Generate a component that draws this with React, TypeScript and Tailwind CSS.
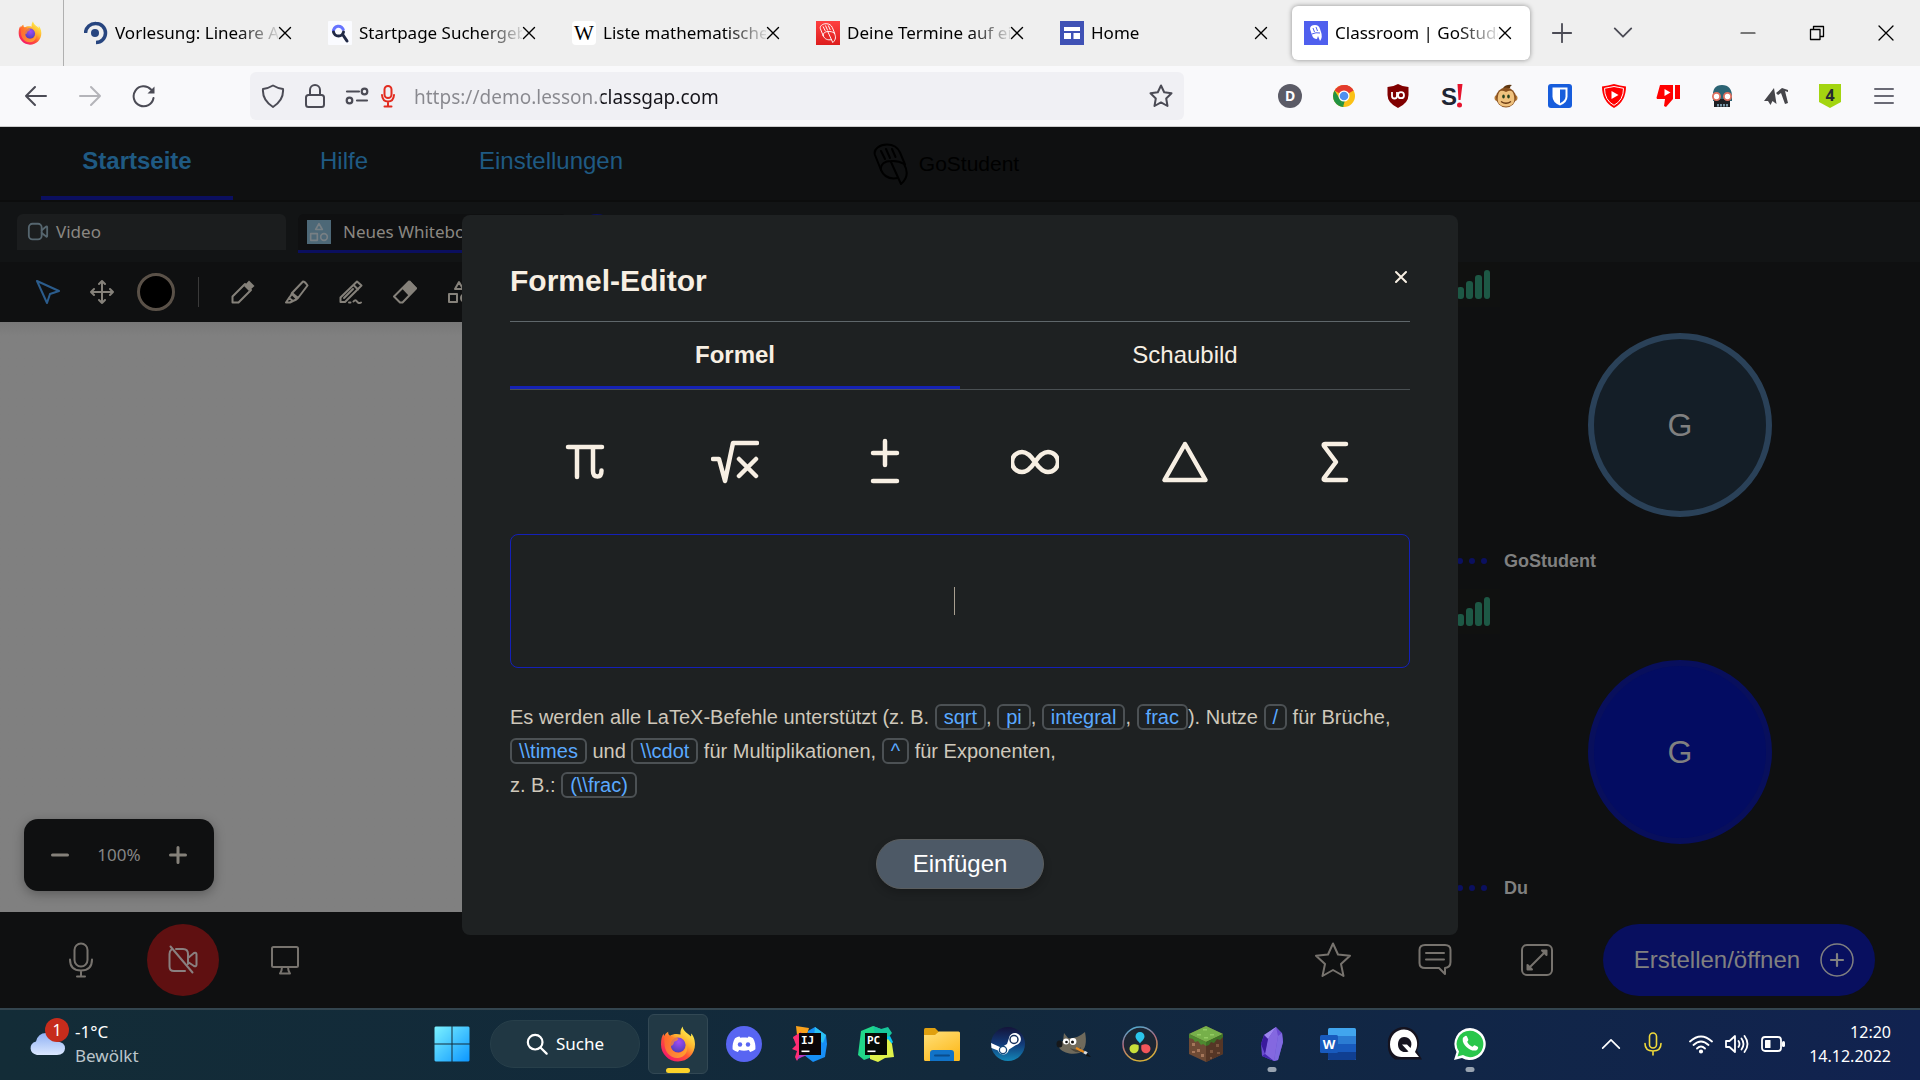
import type { ReactNode } from "react";

/* ---------- small drawing helpers ---------- */

type LineProps = { box?: number; className: string; width?: number; children: ReactNode };

function Line({ box = 24, className, width = 2, children }: LineProps) {
  return (
    <svg
      viewBox={`0 0 ${box} ${box}`}
      className={className}
      fill="none"
      stroke="currentColor"
      strokeWidth={width}
      strokeLinecap="round"
      strokeLinejoin="round"
      aria-hidden="true"
    >
      {children}
    </svg>
  );
}

function Art({ box = 36, className, children }: { box?: number; className: string; children: ReactNode }) {
  return (
    <svg viewBox={`0 0 ${box} ${box}`} className={className} aria-hidden="true">
      {children}
    </svg>
  );
}

const Cross = ({ className }: { className: string }) => (
  <Line box={14} className={className} width={1.4}>
    <path d="M1.500 1.500l11 11M12.500 1.500l-11 11" />
  </Line>
);

/* ---------- logos ---------- */

function Firefox({ className }: { className: string }) {
  return (
    <Art className={className}>
      <defs>
        <linearGradient id="ffBody" x1="0.85" y1="0.1" x2="0.2" y2="0.95">
          <stop offset="0" stopColor="#fff44f" />
          <stop offset="0.35" stopColor="#ffb02e" />
          <stop offset="0.6" stopColor="#ff5634" />
          <stop offset="1" stopColor="#f5156c" />
        </linearGradient>
        <radialGradient id="ffGlobe" cx="0.55" cy="0.3" r="0.75">
          <stop offset="0" stopColor="#a24bf5" />
          <stop offset="1" stopColor="#4a3fb5" />
        </radialGradient>
        <linearGradient id="ffHead" x1="0" y1="0" x2="1" y2="0.8">
          <stop offset="0" stopColor="#ff6a2b" />
          <stop offset="1" stopColor="#ffb52e" />
        </linearGradient>
      </defs>
      <path
        d="M22.500 0.500C21 3 20 5.500 20.500 8.500C17 7.500 12.500 8 10 9.800C8.500 8.800 8 7.300 8.200 5.700C6 6.800 4.800 8.500 4.200 10C3.800 9.300 3.700 8.500 3.800 7.600C1.800 10 1 13.500 1 18.500C1 28 8.800 35.500 18 35.500C27.500 35.500 35 28 35 18.300C35 12.500 32.500 8.500 31 7.500C31.300 8.800 31.200 9.800 31 10.500C28.500 7.500 23.500 6 22.500 0.500Z"
        fill="url(#ffBody)"
      />
      <circle cx="18" cy="19" r="7.600" fill="url(#ffGlobe)" />
      <path
        d="M4 10c3-1 7-.8 10 1.500 2 .4 3.800.6 4.300 1.300-.3 2-3 2.200-4.300 3.200-.2 2.400-1.500 3.400-3 4 0 4.500 4.500 7.500 9 6.500 4-1 6.500-4.500 6-9 3.500 7-1 14-8 14.500C10 32.500 4 25 4.500 17z"
        fill="url(#ffHead)"
        opacity=".75"
      />
    </Art>
  );
}

function GoHand({ className, width = 2 }: { className: string; width?: number }) {
  return (
    <svg viewBox="0 0 36 42" className={className} fill="none" stroke="currentColor" strokeWidth={width} strokeLinecap="round" strokeLinejoin="round" aria-hidden="true">
      <path d="M8 27L2 12C0 6 7 1.500 14 1.500c7 0 11 3.500 13 8l5 12" />
      <path d="M8 27c-1-6 4-9 10-9 6-.5 9 .5 13 3 4 7 4 14-3 20L18 19" />
      <path d="M8 27c3 7 9 9.500 17 8" />
      <path d="M8 8l4 8M13 6l4 9M19 6l3.500 8" />
    </svg>
  );
}

const taskApps: { name: string; state?: "active" | "open"; icon: ReactNode }[] = [
  { name: "Firefox", state: "active", icon: <Firefox className="size-9" /> },
  {
    name: "Discord",
    icon: (
      <Art className="size-9">
        <circle cx="18" cy="18" r="18" fill="#5865f2" />
        <path
          d="M13.500 10.500c-2 .3-3.500 1-4.500 1.700C7 15.500 6.300 19 6.600 23.300c1.800 1.400 3.500 2.200 5.300 2.700l1.300-2c3 1 6.600 1 9.600 0l1.300 2c1.800-.5 3.500-1.300 5.300-2.700.3-4.300-.4-7.800-2.400-11.100-1-.7-2.500-1.400-4.500-1.700l-.8 1.300c-2.400-.4-5-.4-7.400 0z"
          fill="#fff"
        />
        <circle cx="14" cy="18.500" r="2.200" fill="#5865f2" />
        <circle cx="22" cy="18.500" r="2.200" fill="#5865f2" />
      </Art>
    ),
  },
  {
    name: "IntelliJ IDEA",
    icon: (
      <Art className="size-9">
        <path d="M4 0l13 2-3 10-8 4-5-4 4-3z" fill="#f9a11c" />
        <path d="M1 11l8-5 4 14-8 15-2-4 2-6-5-2 4-4z" fill="#fe2d74" />
        <path d="M16 5l7-4 11 8 1 9-2 13-12 5-9-7z" fill="#178ef5" />
        <path d="M23 1l11 8-3 8-9-6z" fill="#2bc0f2" />
        <path d="M4 34l6-8 8 2-8 3z" fill="#b63cc4" />
        <rect x="7" y="7" width="22" height="22" fill="#0b0508" />
        <text x="9" y="18" fill="#fff" className="font-['DejaVu_Sans_Mono',monospace] text-[11px] font-bold">IJ</text>
        <rect x="9.500" y="24.500" width="8" height="1.600" fill="#fff" />
      </Art>
    ),
  },
  {
    name: "PyCharm",
    icon: (
      <Art className="size-9">
        <path d="M3 5l12-5 8 3 3 6-12 22-8 3-6-5z" fill="#21d789" />
        <path d="M15 0l8 3 7-2 4 6-5 6-12-5z" fill="#17c79b" />
        <path d="M24 12l8-2 3 6-4 5z" fill="#07c3f2" />
        <path d="M12 28l18-15 4 5 2 13-9 1-7 4-8-3z" fill="#dff24a" />
        <rect x="7" y="7" width="22" height="22" fill="#050a05" />
        <text x="9" y="18" fill="#fff" className="font-['DejaVu_Sans_Mono',monospace] text-[11px] font-bold">PC</text>
        <rect x="9.500" y="24.500" width="8" height="1.600" fill="#fff" />
      </Art>
    ),
  },
  {
    name: "Explorer",
    icon: (
      <Art className="size-9">
        <defs>
          <linearGradient id="folder" x1="0" y1="0" x2="0.6" y2="1">
            <stop offset="0" stopColor="#ffe07a" />
            <stop offset="1" stopColor="#fdbb20" />
          </linearGradient>
        </defs>
        <path d="M0 3.500Q0 2 1.500 2H11l4 4v6H0z" fill="#e0a00f" />
        <path d="M0 9h11l4-3.500h19.500Q36 5.500 36 7v26.500q0 1.500-1.500 1.500h-33Q0 35 0 33.500z" fill="url(#folder)" />
        <path d="M6 35v-8q0-3 3-3h18q3 0 3 3v8z" fill="#1173c8" />
        <path d="M11 29.500h14" stroke="#0a4d8c" strokeWidth="2" strokeLinecap="round" />
      </Art>
    ),
  },
  {
    name: "Steam",
    icon: (
      <Art className="size-9">
        <defs>
          <linearGradient id="steam" x1="0" y1="0" x2="0" y2="1">
            <stop offset="0" stopColor="#14143a" />
            <stop offset="0.5" stopColor="#123a78" />
            <stop offset="1" stopColor="#1387b8" />
          </linearGradient>
        </defs>
        <circle cx="18" cy="18" r="17" fill="url(#steam)" />
        <path d="M1 17l10 4.500 6-3.500 2-6a6 6 0 1 1 7 7l-7 4.500q-1.500 5-6 5-4-.5-5-4L1.500 22z" fill="#fff" />
        <circle cx="24" cy="13.500" r="4" fill="#fff" stroke="#16305e" strokeWidth="1.500" />
        <circle cx="13" cy="24" r="3.600" fill="none" stroke="#164a7c" strokeWidth="1.300" />
      </Art>
    ),
  },
  {
    name: "GIMP",
    icon: (
      <Art className="size-9">
        <path d="M8 7l4 5c5 1 11-1 17-6 2 10 1 18-6 21-7 2-15 0-19-4-2-2 0-7 3-8z" fill="#6f6a5c" />
        <path d="M14 22c4 2 8 2 11-1l-1 5q-6 1-10-4z" fill="#4b473d" />
        <circle cx="10" cy="15.500" r="3" fill="#fff" />
        <circle cx="17" cy="15.500" r="3.400" fill="#fff" />
        <circle cx="10.500" cy="16" r="1.300" fill="#111" />
        <circle cx="16.500" cy="16" r="1.500" fill="#111" />
        <ellipse cx="3.500" cy="18" rx="3" ry="3.500" fill="#16181a" />
        <path d="M20 22l8 4" stroke="#e58a1f" strokeWidth="2.500" />
        <path d="M28 26l3 1.500" stroke="#ddd" strokeWidth="3" />
        <path d="M31 27l4 4-5-1z" fill="#111" />
      </Art>
    ),
  },
  {
    name: "DaVinci Resolve",
    icon: (
      <Art className="size-9">
        <defs>
          <linearGradient id="davinci" x1="0" y1="0" x2="0.3" y2="1">
            <stop offset="0" stopColor="#3fb8e0" />
            <stop offset="0.5" stopColor="#b06a80" />
            <stop offset="1" stopColor="#d8b03a" />
          </linearGradient>
        </defs>
        <circle cx="18" cy="18" r="17" fill="#1c2633" stroke="url(#davinci)" strokeWidth="1.500" />
        <path d="M18 17.500c-1-2-4.500-4-4.500-7a4.500 4.500 0 0 1 9 0c0 3-3.500 5-4.500 7z" fill="#2bc4ea" />
        <path d="M16.500 19c.5 2.500.5 6-2 7.500a4.500 4.500 0 0 1-5-7.500c2.500-1.500 5 0 7 0z" fill="#c9de3a" />
        <path d="M19.500 19c-.5 2.500-.5 6 2 7.500a4.500 4.500 0 0 0 5-7.500c-2.500-1.500-5 0-7 0z" fill="#f2555a" />
      </Art>
    ),
  },
  {
    name: "Minecraft",
    icon: (
      <Art className="size-9">
        <path d="M18 0l17 8v20l-17 8-17-8V8z" fill="#6e4a35" />
        <path d="M18 16l17-8v20l-17 8z" fill="#553626" />
        <path d="M18 0l17 8-17 8L1 8z" fill="#76b04a" />
        <path d="M1 8l17 8v4l-3-2-2 1-3-4-3 1-2-3-4-1z" fill="#4e8a30" />
        <path d="M35 8l-17 8v4l3-1 2-3 3 1 3-4 3 1 3-3z" fill="#3d7226" />
        <path d="M4 17h3v3H4zM9 23h3v3H9zM13 28h3v3h-3zM4 25h3v2H4z" fill="#a5765a" />
        <path d="M22 24h3v3h-3zM28 18h3v3h-3zM29 26h3v2h-3zM22 31h2v2h-2z" fill="#7d563f" />
        <path d="M15 3h4v1.500h-4zM22 8h4v1.500h-4zM9 8h4v1.500H9zM16 11h4v1.500h-4z" fill="#93cb63" />
      </Art>
    ),
  },
  {
    name: "Obsidian",
    state: "open",
    icon: (
      <Art className="size-9">
        <path d="M22 1l6 6 1 9-5 18-4 1-12-5-1-12 3-9z" fill="#6a4bd0" />
        <path d="M22 1l-8 12-4-4z" fill="#9c86ee" />
        <path d="M14 13l8-12 2 9-4 25-9-7z" fill="#8468e0" />
        <path d="M10 9l4 4-3 15-4-10z" fill="#3a1a9c" />
        <path d="M24 10l4-3 1 9-5 18-4 1z" fill="#7f6ae0" />
        <path d="M8 30l3-2 9 7z" fill="#4326ae" />
      </Art>
    ),
  },
  {
    name: "Word",
    icon: (
      <Art className="size-9">
        <rect x="8" y="2" width="28" height="32" rx="1.500" fill="#41a5ee" />
        <rect x="8" y="10" width="28" height="8" fill="#2b7cd3" />
        <rect x="8" y="18" width="28" height="8" fill="#185abd" />
        <path d="M8 26h28v6.500q0 1.500-1.500 1.500h-25Q8 34 8 32.500z" fill="#103f91" />
        <rect x="0" y="9" width="18" height="18" rx="1.500" fill="#185abd" />
        <text x="9" y="23" textAnchor="middle" fill="#fff" className="font-['Open_Sans',sans-serif] text-[13px] font-bold">W</text>
      </Art>
    ),
  },
  {
    name: "Quizlet",
    icon: (
      <Art className="size-9">
        <path d="M18 1C8 1 1 9 2 18q-1 11 7 15.500h27l-5-9C37 12 28 1 18 1z" fill="#15131f" />
        <path
          d="M18 3.500C10 3.500 4 10 4 18.500c0 8 5.500 12.500 11.500 12.500H33l-4-5c6-10-1-22.500-11-22.500zm0 7.500c6.500 0 9 6 6.500 11L21 18.500h-5l6.500 7c-6 2-10.500-1.500-10.500-7 0-4.500 2.500-7.500 6-7.500z"
          fill="#fff"
        />
      </Art>
    ),
  },
  {
    name: "WhatsApp",
    state: "open",
    icon: (
      <Art className="size-9">
        <path d="M18 2a16 16 0 1 1-8 30L2 34l2.500-8A16 16 0 0 1 18 2z" fill="#fff" />
        <path d="M18 4.800a13.200 13.200 0 1 1-7 24.300L5.500 30.500 7 25.500A13.200 13.200 0 0 1 18 4.800z" fill="#29c64b" />
        <path d="M12.500 10.500c1-1 2-1 2.500 0l1.300 3c.3 1-1.300 2-1 2.600 1 2 2.600 3.600 5 4.600.8.200 1.500-1.700 2.400-1.400l3 1.500c.8.500.5 1.700-.3 2.600-3.500 4-15.500-3-14.700-10.500.1-1 .8-1.800 1.800-2.400z" fill="#fff" />
      </Art>
    ),
  },
];

/* ---------- browser chrome ---------- */

const browserTabs: { title: string; active?: boolean; icon: ReactNode }[] = [
  {
    title: "Vorlesung: Lineare A",
    icon: (
      <Art box={24} className="size-6 shrink-0">
        <path d="M1.500 12A10 10 0 0 1 12 2.500a9.500 9.500 0 0 1 0 19" fill="none" stroke="#27457f" strokeWidth="3.500" />
        <circle cx="11" cy="12" r="4" fill="#27457f" />
      </Art>
    ),
  },
  {
    title: "Startpage Suchergeb",
    icon: (
      <Art box={24} className="size-6 shrink-0">
        <rect width="24" height="24" rx="1" fill="#fafbff" />
        <path d="M5.500 11a5 5 0 0 1 10-1.500" fill="none" stroke="#6573ff" strokeWidth="3" />
        <path d="M5.500 11q1 4 5 4 4 0 5-4M15 14l4 6" fill="none" stroke="#202945" strokeWidth="3" strokeLinecap="round" />
      </Art>
    ),
  },
  {
    title: "Liste mathematische",
    icon: (
      <span className="flex size-6 shrink-0 items-center justify-center rounded-sm bg-white font-['Liberation_Serif',serif] text-[21px] leading-6 text-black">W</span>
    ),
  },
  {
    title: "Deine Termine auf ei",
    icon: (
      <span className="flex size-6 shrink-0 items-center justify-center bg-linear-to-b from-[#ff4040] to-[#dd1c1c] text-white">
        <GoHand className="h-5 w-[18px]" />
      </span>
    ),
  },
  {
    title: "Home",
    icon: (
      <Art box={24} className="size-6 shrink-0">
        <rect width="24" height="24" fill="#3f51b5" />
        <path d="M4 6h16v4H4zM4 12h7v6H4zM13.500 12H20v6h-6.500z" fill="#fff" />
      </Art>
    ),
  },
  {
    title: "Classroom | GoStude",
    active: true,
    icon: (
      <Art box={24} className="size-6 shrink-0">
        <rect width="24" height="24" fill="#4f5fee" />
        <path d="M6 8q0-4 5-4 4 0 5 4l1 3q2 5-1 9l-2-5-1 3q-4 0-5-4z" fill="#fff" />
        <path d="M9 7l1.500 4M12 6l1.500 4M8 13q4-2 8-1" stroke="#4f5fee" strokeWidth="1" fill="none" />
      </Art>
    ),
  },
];

function TabStrip() {
  return (
    <header className="flex h-[66px] shrink-0 items-center bg-[#efefef] font-['Noto_Sans',sans-serif] text-[17px] text-black">
      <div className="flex h-full w-16 shrink-0 items-center border-r border-[#b0b0b0] pl-[18px]">
        <Firefox className="size-6" />
      </div>
      <nav className="flex min-w-0 gap-1.5 pl-2" aria-label="Tabs">
        {browserTabs.map((tab) => (
          <div
            key={tab.title}
            className={
              tab.active
                ? "flex h-[54px] w-[238px] min-w-0 items-center rounded-md bg-white pr-[18px] pl-3 shadow-[0_0_5px_rgba(0,0,0,0.4)]"
                : "flex h-[54px] w-[238px] min-w-0 items-center pr-[18px] pl-3"
            }
          >
            {tab.icon}
            <button type="button" className="ml-[7px] min-w-0 flex-1 overflow-hidden text-left whitespace-nowrap [mask-image:linear-gradient(90deg,#000_75%,rgba(0,0,0,0.1))]">
              {tab.title}
            </button>
            <button type="button" aria-label={`${tab.title} schließen`} className="shrink-0">
              <Cross className="size-3.5" />
            </button>
          </div>
        ))}
      </nav>
      <button type="button" aria-label="Neuer Tab" className="ml-[21px] text-[#4b4b55]">
        <Line className="size-[22px]">
          <path d="M12 2v20M2 12h20" />
        </Line>
      </button>
      <button type="button" aria-label="Alle Tabs" className="ml-[39px] text-[#4b4b55]">
        <Line className="size-[22px]">
          <path d="M3 7l9 9 9-9" />
        </Line>
      </button>
      <div className="ml-auto flex items-center gap-[53px] pr-[26px] text-black">
        <button type="button" aria-label="Minimieren">
          <Line box={16} className="size-4" width={1.2}>
            <path d="M1 8h14" />
          </Line>
        </button>
        <button type="button" aria-label="Fenster verkleinern">
          <Line box={16} className="size-4" width={1.3}>
            <path d="M1.500 4.500h9.500v10H1.500zM4.500 4.500V1.500h10v10H11" />
          </Line>
        </button>
        <button type="button" aria-label="Schließen">
          <Line box={16} className="size-4" width={1.3}>
            <path d="M1 1l14 14M15 1L1 15" />
          </Line>
        </button>
      </div>
    </header>
  );
}

const extensions: { name: string; icon: ReactNode }[] = [
  {
    name: "Dashlane",
    icon: (
      <span className="flex size-6 items-center justify-center rounded-full bg-[#5b5b66] text-sm font-bold text-white">D</span>
    ),
  },
  {
    name: "Chrome",
    icon: (
      <Art box={24} className="size-6">
        <circle cx="12" cy="12" r="11" fill="#fbc116" />
        <path d="M12 12L2.500 6.500A11 11 0 0 1 21.500 6.500z" fill="#e33b2e" />
        <path d="M12 1a11 11 0 0 1 9.500 5.500H12z" fill="#e33b2e" />
        <path d="M2.500 6.500L8 15l3.500 8A11 11 0 0 1 2.500 6.500z" fill="#229342" />
        <path d="M8 15l5 1-2 7z" fill="#229342" />
        <circle cx="12" cy="12" r="5.500" fill="#fff" />
        <circle cx="12" cy="12" r="4.300" fill="#4e8ff0" />
      </Art>
    ),
  },
  {
    name: "uBlock Origin",
    icon: (
      <Art box={24} className="size-6">
        <path d="M12 0q5 3 10.500 3v8q0 8-10.500 13Q1.500 19 1.500 11V3Q7 3 12 0z" fill="#800000" />
        <path d="M6 8v4q0 2.500 2.500 2.500T11 12V8" fill="none" stroke="#fff" strokeWidth="1.800" />
        <circle cx="15" cy="11.200" r="3" fill="none" stroke="#fff" strokeWidth="1.800" />
      </Art>
    ),
  },
  {
    name: "Stylus",
    icon: (
      <Art box={24} className="size-6">
        <text x="1" y="21" fill="#1f2533" className="font-['Liberation_Sans',sans-serif] text-[24px] font-bold">S</text>
        <path d="M17.500 0h5l-2 16h-2z" fill="#e6142d" />
        <circle cx="19.500" cy="21" r="2.500" fill="#e6142d" />
      </Art>
    ),
  },
  {
    name: "Tampermonkey",
    icon: (
      <Art box={24} className="size-6">
        <path d="M9 4q3-4 9-3-2 1-2 3z" fill="#5d3510" />
        <circle cx="3.500" cy="14" r="3" fill="#b57834" />
        <circle cx="20.500" cy="14" r="3" fill="#b57834" />
        <circle cx="12" cy="13.500" r="10" fill="#8a5220" />
        <path d="M12 8q7-4 8 4 2 10-8 10.500Q2 22 4 12q1-8 8-4z" fill="#f0c27e" />
        <ellipse cx="9.500" cy="12.500" rx="1.300" ry="2" fill="#27401c" />
        <ellipse cx="14.500" cy="12.500" rx="1.300" ry="2" fill="#27401c" />
        <path d="M7 17.500q5 3.500 10 0" stroke="#6b3a12" strokeWidth="1.400" fill="none" />
      </Art>
    ),
  },
  {
    name: "Bitwarden",
    icon: (
      <Art box={24} className="size-6">
        <rect width="24" height="24" rx="3" fill="#175ddc" />
        <path d="M4.500 3.500h15v9q0 6-7.500 9-7.500-3-7.500-9z" fill="#fff" />
        <path d="M12 5.500h5.500v7q0 4-5.500 6.800z" fill="#175ddc" />
      </Art>
    ),
  },
  {
    name: "YouTube Enhancer",
    icon: (
      <Art box={24} className="size-6">
        <path d="M12 0q6 1.500 12 2.500 0 15-12 21.500Q0 17.500 0 2.500 6 1.500 12 0z" fill="#f00" />
        <path d="M12 2.500q5 1 9.500 1.800 0 12-9.500 17-9.500-5-9.500-17Q7 3.500 12 2.500z" fill="none" stroke="#fff" strokeWidth="1" />
        <path d="M9.500 7l7 4-7 4z" fill="#fff" />
      </Art>
    ),
  },
  {
    name: "Return Dislike",
    icon: (
      <Art box={24} className="size-6">
        <path d="M4 1h13v14l-7 8-2-1 1-7H1q-1-1 0-3z" fill="#f00" />
        <path d="M19 1h5v14h-5z" fill="#f00" />
        <path d="M8.500 5l6 3.500-6 3.500z" fill="#fff" />
      </Art>
    ),
  },
  {
    name: "Maskierte Identität",
    icon: (
      <Art box={24} className="size-6">
        <path d="M3 13q-1-12 9-12t10 12v4H3z" fill="#2c6474" />
        <path d="M4 15h16v8H4z" fill="#1c1f24" />
        <circle cx="6.500" cy="12.500" r="3.600" fill="#fff" stroke="#e0705f" strokeWidth="1.800" />
        <circle cx="17.500" cy="12.500" r="3.600" fill="#fff" stroke="#e0705f" strokeWidth="1.800" />
        <path d="M8 20v2.500M11 20v2.500M14 20v2.500M17 20v2.500" stroke="#9fc7dd" strokeWidth="1.400" />
      </Art>
    ),
  },
  {
    name: "Werkzeuge",
    icon: (
      <Art box={24} className="size-6">
        <path d="M0 17L10 4l2.500 16-4-3-2 4-2.500-4z" fill="#45454a" />
        <path d="M12 9l6-5 6 2v2l-3-1 3 12-3 1-4-11-3 2z" fill="#45454a" />
      </Art>
    ),
  },
  {
    name: "Adguard",
    icon: (
      <Art box={24} className="size-6">
        <path d="M1 0h22v18l-11 6-11-6z" fill="#a3d510" />
        <text x="12" y="17" textAnchor="middle" fill="#262b33" className="font-['Open_Sans',sans-serif] text-base font-bold">4</text>
      </Art>
    ),
  },
];

function AddressBar() {
  return (
    <div className="flex h-[61px] shrink-0 items-center border-b border-[#cccccc] bg-[#f9f9fb] font-['Noto_Sans',sans-serif] text-[#4b4b55]">
      <div className="flex w-[250px] shrink-0 items-center gap-[30px] pl-6">
        <button type="button" aria-label="Zurück">
          <Line className="size-6">
            <path d="M22 12H2M11 3l-9 9 9 9" />
          </Line>
        </button>
        <button type="button" aria-label="Vor" className="text-[#b4b4b9]">
          <Line className="size-6">
            <path d="M2 12h20M13 3l9 9-9 9" />
          </Line>
        </button>
        <button type="button" aria-label="Neu laden">
          <Line className="size-6">
            <path d="M21.500 14A10 10 0 1 1 19 5.500" />
            <path d="M22.500 2.500v7h-7z" fill="currentColor" stroke="none" />
          </Line>
        </button>
      </div>
      <div className="flex h-12 max-w-[934px] min-w-0 flex-1 items-center rounded-md bg-[#f0f0f4] px-[11px]">
        <Line className="size-6 shrink-0">
          <path d="M12 1.500q5 3 10 3.500 1 11-10 18Q1 16 2 5q5-.5 10-3.500z" />
        </Line>
        <Line className="ml-[18px] size-6 shrink-0">
          <rect x="3" y="11" width="18" height="12" rx="2.500" />
          <path d="M7 11V6a5 5 0 0 1 10 0v5" />
        </Line>
        <Line className="ml-[18px] size-6 shrink-0" width={2.2}>
          <path d="M2 7.500h12M12 16.500h10" />
          <circle cx="19.500" cy="7.500" r="2.800" />
          <circle cx="4.500" cy="16.500" r="2.800" />
        </Line>
        <Line className="ml-[7px] size-6 shrink-0 text-[#e22c20]">
          <rect x="8.500" y="2" width="7" height="12" rx="3.500" />
          <path d="M6 11q.5 6.500 6 6.500t6-6.500M12 18v4M8.500 22.500h7" />
        </Line>
        <input
          type="text"
          aria-label="Adresse"
          defaultValue="https://demo.lesson.classgap.com"
          className="ml-3.5 min-w-0 flex-1 bg-[linear-gradient(90deg,#88888e_187px,#15141a_187px)] bg-clip-text pt-0.5 text-[19px] text-transparent outline-none"
        />
        <button type="button" aria-label="Lesezeichen" className="shrink-0">
          <Line className="size-6">
            <path d="M12 1.500l3.200 6.800 7.300 1-5.300 5.200 1.300 7.500-6.500-3.600L5.500 22l1.300-7.500L1.500 9.300l7.300-1z" />
          </Line>
        </button>
      </div>
      <div className="ml-auto flex shrink-0 items-center gap-[30px] pr-6">
        {extensions.map((ext) => (
          <button key={ext.name} type="button" aria-label={ext.name}>
            {ext.icon}
          </button>
        ))}
        <button type="button" aria-label="Menü" className="text-[#6a6a75]">
          <Line className="size-6">
            <path d="M3 5h18M3 12h18M3 19h18" />
          </Line>
        </button>
      </div>
    </div>
  );
}

/* ---------- classroom ---------- */

function ClassroomHeader() {
  return (
    <div className="flex h-[75px] shrink-0 border-b-2 border-[#0c0d0d] bg-[#0f1011] text-2xl text-[#1f5a83]">
      <nav className="flex flex-1 gap-[15px]">
        <a href="#start" className="ml-[41px] flex w-48 items-center justify-center border-b-4 border-[#0b0f5f] pb-0.5 font-bold">Startseite</a>
        <a href="#hilfe" className="flex w-48 items-center justify-center pb-1.5">Hilfe</a>
        <a href="#einstellungen" className="flex w-48 items-center justify-center pb-1.5">Einstellungen</a>
      </nav>
      <div className="flex items-center gap-2.5 text-[21px] text-black">
        <GoHand className="h-[42px] w-9" />
        <span>GoStudent</span>
      </div>
      <div className="flex-1 pr-7" />
    </div>
  );
}

const ShapesGlyph = () => (
  <>
    <path d="M12 2l4 7H8zM2 14h8v8H2z" />
    <circle cx="18" cy="18" r="4" />
  </>
);

function WorkspaceTabs() {
  return (
    <div className="flex h-[60px] shrink-0 items-start gap-3 bg-[#121415] pt-3 pl-[17px] font-['Noto_Sans',sans-serif] text-[17px] text-[#8a8782]">
      <button type="button" className="flex h-9 w-[269px] items-center gap-[7px] rounded-t-md bg-[#1b1d1e] pl-2.5">
        <Line className="size-[22px] text-[#56666f]">
          <rect x="2" y="3" width="14" height="17" rx="4" />
          <path d="M16 10l5-4q1-.5 1 1v9q0 1.500-1 1l-5-4" />
        </Line>
        Video
      </button>
      <button type="button" className="flex h-[39px] w-[269px] items-center gap-3 rounded-t-md border-b-[3px] border-[#0b0f5f] bg-[#0f1011] pl-[9px]">
        <span className="flex size-6 items-center justify-center bg-[#4d6877] text-[#777f84]">
          <Line className="size-5">
            <ShapesGlyph />
          </Line>
        </span>
        Neues Whiteboard
      </button>
      <button type="button" aria-label="Whiteboard hinzufügen" className="size-9 rounded-full border-2 border-[#0b0f5f]" />
    </div>
  );
}

const tools: { name: string; icon: ReactNode }[] = [
  {
    name: "Stift",
    icon: (
      <Line className="size-6">
        <path d="M1.500 22.500v-6L14 4l6 6L7.500 22.500z" />
        <path d="M13 6l5-5.500 5.500 5.500L18 11z" fill="currentColor" stroke="none" />
      </Line>
    ),
  },
  {
    name: "Textmarker",
    icon: (
      <Line className="size-6">
        <path d="M7 13L18 1.500q2 0 4.500 4L13 18zM7 13q-1 3-3 5l4 3q3-1 5-3M4 18l-3 4.500h4l3-1.500M8 15l3 3" />
      </Line>
    ),
  },
  {
    name: "Zeichnen",
    icon: (
      <Line className="size-6">
        <path d="M1.500 22v-4.500L18 1.500l4.500 4L6 22zM14.500 5l4.500 4.500M5 18l9-9" />
        <path d="M10 22.500h1.500M14.500 21.500q2-2.500 3.500 0t4 1" />
      </Line>
    ),
  },
  {
    name: "Radierer",
    icon: (
      <Line className="size-6">
        <path d="M9 22.500H7L1 16.500 16 1.500l7 7-13.500 14z" />
        <path d="M9 8.500l8-8 7 7.500-8 8z" fill="currentColor" stroke="none" />
      </Line>
    ),
  },
  {
    name: "Formen",
    icon: (
      <Line className="size-6">
        <ShapesGlyph />
      </Line>
    ),
  },
];

function DrawingTools() {
  return (
    <div className="flex h-[60px] shrink-0 items-center gap-[30px] bg-[#0f1011] pl-9 text-[#85817a]">
      <button type="button" aria-label="Auswahl" className="text-[#2b5c8c]">
        <Line className="size-6">
          <path d="M1 1l22 10-9 3-3 9z" />
        </Line>
      </button>
      <button type="button" aria-label="Verschieben">
        <Line className="size-6">
          <path d="M12 1v22M1 12h22M9 4l3-3 3 3M9 20l3 3 3-3M4 9l-3 3 3 3M20 9l3 3-3 3" />
        </Line>
      </button>
      <button type="button" aria-label="Farbe" className="-mx-[7px] size-[38px] rounded-full border-[3px] border-[#5a5148] bg-black" />
      <span className="mr-0.5 h-[30px] w-px bg-[#3a3a3a]" />
      {tools.map((tool) => (
        <button key={tool.name} type="button" aria-label={tool.name}>
          {tool.icon}
        </button>
      ))}
    </div>
  );
}

function Whiteboard() {
  return (
    <main className="flex min-w-0 flex-1 flex-col">
      <DrawingTools />
      <div className="flex flex-1 items-end bg-[#808080] bg-linear-to-b from-[#787878] to-[#808080] to-[14px] pb-[21px] pl-6">
        <div className="flex h-[72px] w-[190px] items-center justify-between rounded-[14px] bg-[#0f1011] px-[27px] font-['Noto_Sans',sans-serif] text-[17px] text-[#858585] shadow-[0_3px_12px_rgba(0,0,0,0.3)]">
          <button type="button" aria-label="Verkleinern" className="text-[#85817a]">
            <Line box={18} className="size-[18px]" width={3}>
              <path d="M1.500 9h15" />
            </Line>
          </button>
          <span>100%</span>
          <button type="button" aria-label="Vergrößern" className="text-[#85817a]">
            <Line box={18} className="size-[18px]" width={3}>
              <path d="M1.500 9h15M9 1.500v15" />
            </Line>
          </button>
        </div>
      </div>
    </main>
  );
}

const participants = [
  { name: "GoStudent", circle: "flex size-[184px] items-center justify-center rounded-full border-[6px] border-[#2a4158] bg-[#141e27] text-[32px]" },
  { name: "Du", circle: "flex size-[184px] items-center justify-center rounded-full border-[6px] border-[#080f5c] bg-[#030c62] text-[32px]" },
];

function Participants() {
  return (
    <aside className="flex w-[480px] shrink-0 flex-col overflow-hidden bg-[#0f1011] text-[#808080]">
      {participants.map((person) => (
        <section key={person.name} className="flex h-[327px] shrink-0 flex-col">
          <div className="flex h-[45px] w-[60px] items-end gap-0.5 bg-[#101110] pb-2 pl-[17px]">
            <span className="h-3 w-[7px] shrink-0 rounded-[3px] bg-[#1d5845]" />
            <span className="h-[18px] w-[7px] shrink-0 rounded-[3px] bg-[#1d5845]" />
            <span className="h-6 w-[7px] shrink-0 rounded-[3px] bg-[#1d5845]" />
            <span className="h-[29px] w-[6px] shrink-0 rounded-[3px] bg-[#1d5845]" />
          </div>
          <div className="mt-[26px] flex justify-center">
            <div className={person.circle}>G</div>
          </div>
          <div className="mt-[30px] flex h-7 items-center gap-[17px] pl-[17px] text-lg font-bold">
            <span className="flex gap-1.5">
              <i className="size-1.5 rounded-full bg-[#0b1060]" />
              <i className="size-1.5 rounded-full bg-[#0b1060]" />
              <i className="size-1.5 rounded-full bg-[#0b1060]" />
            </span>
            {person.name}
          </div>
        </section>
      ))}
    </aside>
  );
}

function CallControls() {
  return (
    <footer className="flex h-24 shrink-0 items-center justify-between bg-[#0f1011] pr-[45px] pl-[45px] text-[#77736e]">
      <div className="flex gap-[30px]">
        <button type="button" aria-label="Mikrofon" className="flex size-[72px] items-center justify-center rounded-full">
          <Line box={36} className="size-9">
            <rect x="11.500" y="1.500" width="13" height="23" rx="6.500" />
            <path d="M7 17.500q0 11 11 11t11-11M18 29v5M14 34.500h8" />
          </Line>
        </button>
        <button type="button" aria-label="Kamera aus" className="flex size-[72px] items-center justify-center rounded-full bg-[#5f1011] text-[#8a8080]">
          <Line box={30} className="size-[30px]">
            <path d="M8 4h7q5 0 5 5v10M17 26H6q-4.500 0-4.500-4.500V9q0-3 2-4.500M20 13l6-5q2.500-1 2.500 1.500v10q0 2.500-2.500 1.500l-6-4M2.500 1.500l22 26" />
          </Line>
        </button>
        <button type="button" aria-label="Bildschirm teilen" className="flex size-[72px] items-center justify-center rounded-full">
          <Line box={30} className="size-[30px]">
            <rect x="2" y="2" width="26" height="20" rx="1.500" />
            <path d="M12 22q0 4-2 6.500h10q-2-2.500-2-6.500M10 28.500h10" />
          </Line>
        </button>
      </div>
      <div className="flex gap-[30px]">
        <button type="button" aria-label="Bewerten" className="flex size-[72px] items-center justify-center rounded-full">
          <Line box={36} className="size-9">
            <path d="M18 1.500l5 11 12 1.200-9 8.300 2.500 12L18 28 7.500 34 10 22 1 13.700l12-1.200z" />
          </Line>
        </button>
        <button type="button" aria-label="Chat" className="flex size-[72px] items-center justify-center rounded-full">
          <Line box={36} className="size-9">
            <path d="M8 3h20q5.500 0 5.500 5v12q0 5.500-5.500 6v6l-6-6H8q-5.500 0-5.500-5V8Q2.500 3 8 3zM9 11h18M9 17.500h18" />
          </Line>
        </button>
        <button type="button" aria-label="Vollbild" className="flex size-[72px] items-center justify-center rounded-full">
          <Line box={36} className="size-9">
            <rect x="3" y="3" width="30" height="30" rx="5" />
            <path d="M10 26L26 10" />
            <path d="M23 8.500h4.500V13zM8.500 23v4.500H13z" fill="currentColor" />
          </Line>
        </button>
        <button type="button" className="flex h-[72px] w-[272px] items-center justify-center gap-5 rounded-full bg-[#080f5f] pl-2.5 text-2xl whitespace-nowrap text-[#808080]">
          Erstellen/öffnen
          <Line box={34} className="size-[34px] shrink-0" width={1.5}>
            <circle cx="17" cy="17" r="16" />
            <path d="M17 11v12M11 17h12" strokeWidth="2.200" />
          </Line>
        </button>
      </div>
    </footer>
  );
}

/* ---------- formula dialog ---------- */

const symbols: { name: string; paths: ReactNode }[] = [
  {
    name: "Griechische Buchstaben",
    paths: <path d="M7 9h34M16 9v30M32 9v24q0 5.500 4.500 5.500 4 0 4-6" />,
  },
  { name: "Wurzel", paths: <path d="M2 21h6l6 22L22 5h24M28 21l17 17M45 21L28 38" /> },
  { name: "Operatoren", paths: <path d="M24 3v24M12 15h24M12 43h24" /> },
  {
    name: "Unendlich",
    paths: <path d="M24 24c-4-6-8-10-13-10a10 10 0 0 0 0 20c5 0 9-4 13-10s8-10 13-10a10 10 0 0 1 0 20c-5 0-9-4-13-10z" />,
  },
  { name: "Dreieck", paths: <path d="M24 6L3.500 42h41z" /> },
  { name: "Summe", paths: <path d="M35 6H14q-2 0-1 2l12 16-12 16q-1 2 1 2h21" /> },
];

function Key({ children }: { children: ReactNode }) {
  return (
    <kbd className="rounded-md border-2 border-[#4c5154] px-[7px] font-['Liberation_Sans',Arial,sans-serif] text-xl leading-[22px] text-[#5aa9ff]">
      {children}
    </kbd>
  );
}

function FormulaDialog() {
  return (
    <div className="absolute inset-0 flex items-start justify-center pt-[88px]">
      <section
        role="dialog"
        aria-labelledby="formula-title"
        className="flex w-[996px] max-w-full flex-col rounded-lg bg-[#1e2122] px-12 pt-[43px] pb-[46px] text-[#f7efe3]"
      >
        <div className="flex h-16 justify-between border-b border-[#5f676b]">
          <h1 id="formula-title" className="text-[30px] leading-[45px] font-bold">Formel-Editor</h1>
          <button type="button" aria-label="Dialog schließen" className="mr-0.5 flex h-[38px] items-center">
            <Line box={14} className="size-3.5">
              <path d="M2 2l10 10M12 2L2 12" />
            </Line>
          </button>
        </div>
        <div role="tablist" className="grid h-[68px] grid-cols-2 border-b border-[#4a5053] text-2xl">
          <button type="button" role="tab" aria-selected="true" className="border-b-[3px] border-[#1522b4] pt-0.5 font-bold">Formel</button>
          <button type="button" role="tab" aria-selected="false" className="border-b-[3px] border-transparent pt-0.5">Schaubild</button>
        </div>
        <div className="mt-12 grid grid-cols-6">
          {symbols.map((s) => (
            <button key={s.name} type="button" aria-label={s.name} className="flex justify-center">
              <Line box={48} className="size-12" width={4.5}>
                {s.paths}
              </Line>
            </button>
          ))}
        </div>
        <div className="relative mt-12 flex h-[134px] items-center rounded-lg border border-[#1420b8]">
          <input type="text" aria-label="Formel" className="h-full w-full bg-transparent text-center text-2xl caret-transparent outline-none" />
          <span className="absolute left-1/2 -ml-1.5 h-7 w-px bg-[#a89f90]" />
        </div>
        <p className="mt-8 text-xl leading-[34px] text-[#cfc8bb]">
          Es werden alle LaTeX-Befehle unterstützt (z. B. <Key>sqrt</Key>, <Key>pi</Key>, <Key>integral</Key>, <Key>frac</Key>). Nutze <Key>/</Key> für Brüche,
          <br />
          <Key>\\times</Key> und <Key>\\cdot</Key> für Multiplikationen, <Key>^</Key> für Exponenten,
          <br />
          z. B.: <Key>(\\frac)</Key>
        </p>
        <button type="button" className="mt-[37px] h-[50px] w-[168px] self-center rounded-full border border-[#5a5d5e] bg-[#4d5966] text-2xl text-white shadow-[0_4px_8px_rgba(0,0,0,0.2)]">
          Einfügen
        </button>
      </section>
    </div>
  );
}

/* ---------- taskbar ---------- */

function Taskbar() {
  return (
    <footer className="grid h-[72px] shrink-0 grid-cols-[1fr_auto_1fr] items-center border-t-2 border-[#33454f] bg-linear-to-r from-[#132c37] via-[#12293c] to-[#112250] pb-0.5 pl-0.5 font-['Noto_Sans',sans-serif] text-[17px] leading-6 text-white">
      <button type="button" className="flex items-center gap-2.5 pl-[27px] text-left">
        <span className="relative">
          <Art className="size-9">
            <defs>
              <linearGradient id="cloud" x1="0" y1="0" x2="0" y2="1">
                <stop offset="0" stopColor="#8fb0f4" />
                <stop offset="1" stopColor="#dbe8ff" />
              </linearGradient>
            </defs>
            <path d="M8 29a8 7 0 0 1-1-13.500Q9 7 17 7t11 8.500q8 .5 8 7-.5 6.500-8 6.500z" fill="url(#cloud)" />
          </Art>
          <span className="absolute -top-2 left-4 flex size-6 items-center justify-center rounded-full bg-[#c62c1c] text-base">1</span>
        </span>
        <span>
          -1°C
          <br />
          <span className="text-[#bcc6cb]">Bewölkt</span>
        </span>
      </button>
      <div className="flex items-center gap-1.5">
        <button type="button" aria-label="Start" className="flex size-[60px] items-center justify-center">
          <Art className="size-9">
            <defs>
              <linearGradient id="win" gradientUnits="userSpaceOnUse" x1="0" y1="0" x2="36" y2="36">
                <stop offset="0" stopColor="#7df3ff" />
                <stop offset="1" stopColor="#0a95ff" />
              </linearGradient>
            </defs>
            <path d="M1.500.5h16v17H.5v-16zM18.500.5h16l1 1v16h-17zM.5 18.500h17v17h-16l-1-1zM18.500 18.500h17v16l-1 1h-16z" fill="url(#win)" />
          </Art>
        </button>
        <button type="button" className="mx-0.5 flex h-12 w-[150px] items-center justify-center gap-2 rounded-full border border-[#273f4a] bg-[#203743]">
          <Line className="size-[22px]" width={2.4}>
            <circle cx="10" cy="10" r="8" />
            <path d="M16 16l6.500 6.500" />
          </Line>
          Suche
        </button>
        {taskApps.map((app) => (
          <button
            key={app.name}
            type="button"
            aria-label={app.name}
            className={
              app.state === "active"
                ? "relative flex size-[60px] items-center justify-center rounded-md border border-[#324854] bg-[#223945]"
                : "relative flex size-[60px] items-center justify-center"
            }
          >
            {app.icon}
            {app.state === "active" && <span className="absolute bottom-0 left-1/2 h-[5px] w-6 -translate-x-1/2 rounded-full bg-[#fcd32a]" />}
            {app.state === "open" && <span className="absolute bottom-0.5 left-1/2 h-[5px] w-[9px] -translate-x-1/2 rounded-full bg-[#98a3b0]" />}
          </button>
        ))}
      </div>
      <div className="flex items-center justify-end pr-[29px]">
        <Line className="size-5" width={2}>
          <path d="M2 17L12 7l10 10" />
        </Line>
        <Line className="ml-5 size-6 text-[#f0d93a]" width={1.6}>
          <rect x="8.500" y="1" width="7" height="15" rx="3.500" />
          <path d="M4 11.500q0 7.500 8 7.500t8-7.500M12 19v4" />
        </Line>
        <Line className="ml-6 size-6" width={1.8}>
          <path d="M1 9.500q11-10 22 0M4.500 13q7.500-7 15 0M8 16.500q4-4 8 0" />
          <circle cx="12" cy="19.500" r="1.200" fill="currentColor" />
        </Line>
        <Line className="ml-3 size-6" width={1.8}>
          <path d="M1 9h3.500L10 4v16l-5.500-5H1zM13.500 9q2 3 0 6M16.500 6.500q4 5.500 0 11M19.500 4q6 8 0 16" />
        </Line>
        <Line className="ml-3 size-6" width={1.8}>
          <rect x="1" y="5" width="19" height="14" rx="3" />
          <path d="M22.500 10.500v3" strokeWidth="3" />
          <rect x="4" y="8" width="5.500" height="8" rx=".5" fill="currentColor" stroke="none" />
        </Line>
        <span className="ml-6 text-right text-base">
          12:20
          <br />
          14.12.2022
        </span>
      </div>
    </footer>
  );
}

export default function App() {
  return (
    <div className="flex h-screen min-h-[1080px] w-full flex-col overflow-hidden font-['Liberation_Sans',Arial,sans-serif]">
      <TabStrip />
      <AddressBar />
      <div className="relative flex min-h-0 flex-1 flex-col bg-[#0f1011]">
        <ClassroomHeader />
        <WorkspaceTabs />
        <div className="flex min-h-0 flex-1">
          <Whiteboard />
          <Participants />
        </div>
        <CallControls />
        <FormulaDialog />
      </div>
      <Taskbar />
    </div>
  );
}
